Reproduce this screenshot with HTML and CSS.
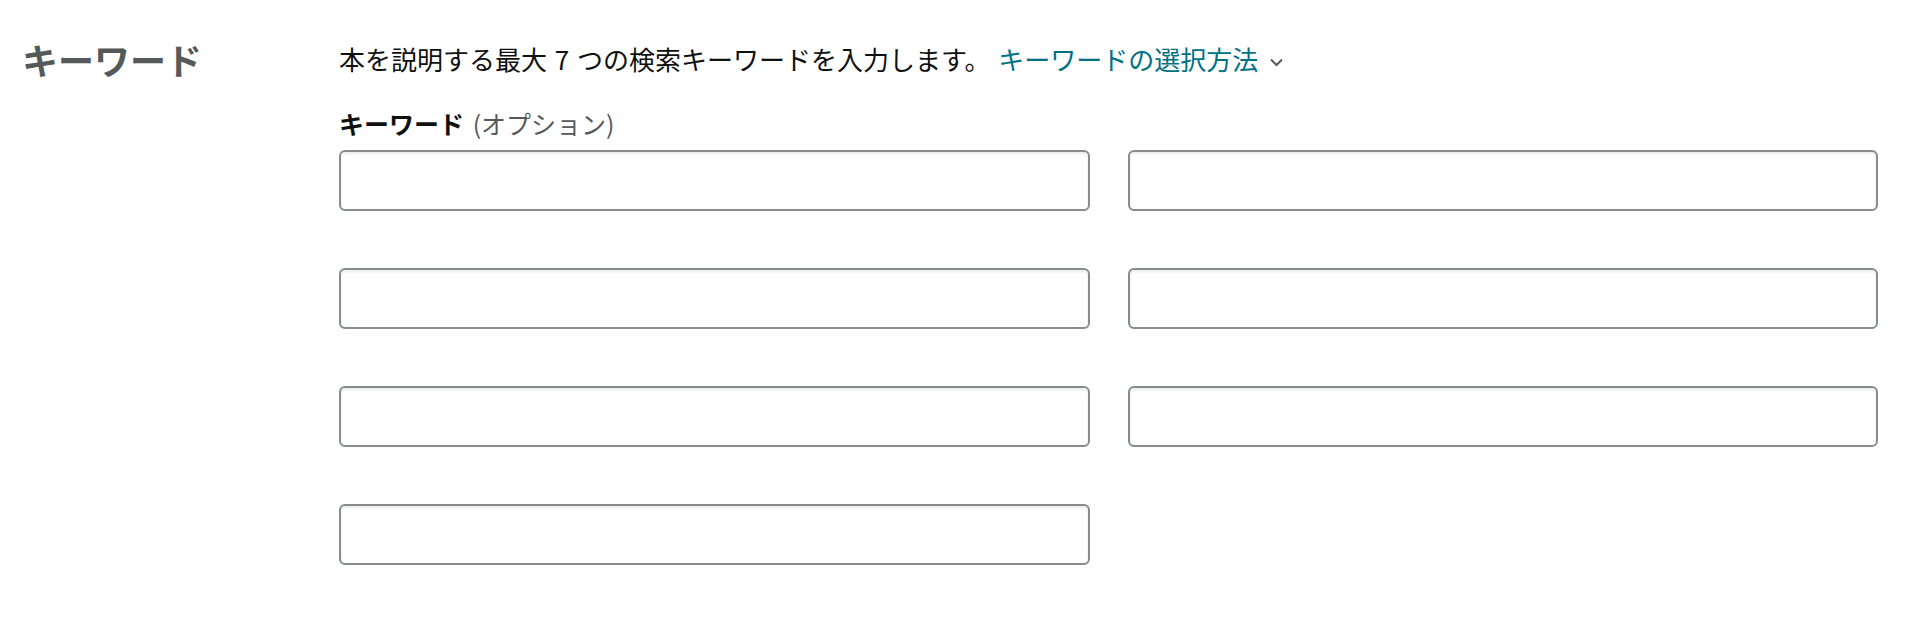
FILE: index.html
```html
<!DOCTYPE html>
<html lang="ja">
<head>
<meta charset="utf-8">
<title>キーワード</title>
<link rel="stylesheet" href="styles.css">
</head>
<body>
<section class="section">
  <h2 class="title">キーワード</h2>
  <div class="content">
    <p class="desc">本を説明する最大 7 つの検索キーワードを入力します。 <a class="link" href="#">キーワードの選択方法<svg class="chev" width="15" height="10" viewBox="0 0 15 10"><polyline points="2,2.5 7.5,8 13,2.5" fill="none" stroke="#565959" stroke-width="2"/></svg></a></p>
    <div class="label"><strong>キーワード</strong> <span class="opt">(オプション)</span></div>
    <div class="grid">
      <input class="field" type="text">
      <input class="field" type="text">
      <input class="field" type="text">
      <input class="field" type="text">
      <input class="field" type="text">
      <input class="field" type="text">
      <input class="field" type="text">
    </div>
  </div>
</section>
</body>
</html>
```

FILE: styles.css
```css
html, body {
  margin: 0;
  padding: 0;
  background: #fff;
}
body {
  font-family: "Noto Sans CJK JP", "Noto Sans", sans-serif;
  color: #0f1111;
}
.section {
  display: flex;
  padding-top: 38px;
}
.title {
  box-sizing: border-box;
  width: 339px;
  flex: none;
  margin: 0;
  padding-left: 22px;
  font-size: 36px;
  line-height: 43px;
  font-weight: 700;
  color: #565959;
}
.content {
  width: 1539px;
}
.desc {
  margin: 2px 0 0 0;
  font-size: 26px;
  line-height: 38px;
  word-spacing: 2px;
  color: #0f1111;
}
.link {
  color: #007185;
  text-decoration: none;
  word-spacing: 0;
}
.chev {
  margin-left: 11px;
  vertical-align: 3px;
}
.label {
  margin-top: 27px;
  font-size: 25px;
  line-height: 36px;
  word-spacing: 3px;
}
.label strong {
  font-weight: 700;
  color: #0f1111;
}
.opt {
  color: #565959;
}
.grid {
  margin-top: 9px;
  display: grid;
  grid-template-columns: 1fr 1fr;
  column-gap: 38px;
  row-gap: 57px;
}
.field {
  box-sizing: border-box;
  height: 61px;
  width: 100%;
  margin: 0;
  border: 2px solid #888c8c;
  border-radius: 6px;
  box-shadow: inset 0 2px 3px rgba(15, 17, 17, 0.08);
  background: #fff;
  font-size: 24px;
  padding: 0 12px;
}
```
